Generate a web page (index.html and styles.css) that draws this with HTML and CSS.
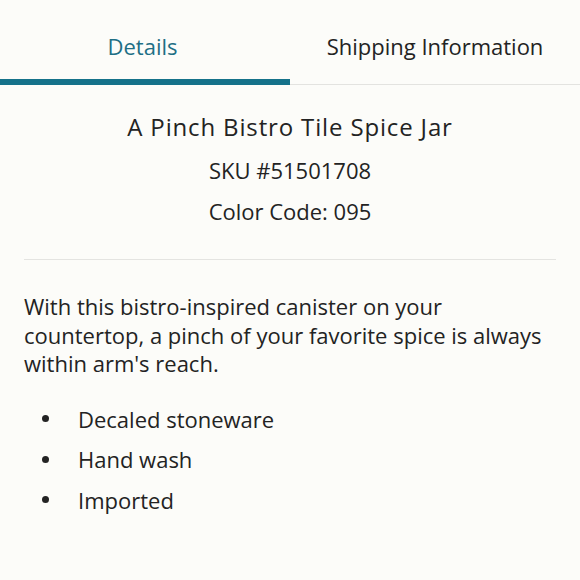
FILE: index.html
```html
<!DOCTYPE html>
<html>
<head>
<meta charset="utf-8">
<link rel="stylesheet" href="styles.css">
</head>
<body>
<div class="tabs">
  <div class="tab active">Details</div>
  <div class="tab">Shipping Information</div>
</div>
<div class="content">
  <div class="head">
    <h1 class="title">A Pinch Bistro Tile Spice Jar</h1>
    <div class="meta">SKU #51501708</div>
    <div class="meta">Color Code: 095</div>
  </div>
  <p class="desc">With this bistro-inspired canister on your countertop, a pinch of your favorite spice is always within arm's reach.</p>
  <ul class="list">
    <li>Decaled stoneware</li>
    <li>Hand wash</li>
    <li>Imported</li>
  </ul>
</div>
</body>
</html>
```
FILE: styles.css
```css
html, body {
  margin: 0;
  padding: 0;
  background: #fcfcf9;
}
body {
  font-family: "Open Sans", "Noto Sans", sans-serif;
  color: #232323;
  width: 580px;
}
.tabs {
  display: flex;
  border-bottom: 1px solid #e3e3e0;
}
.tab {
  flex: 1;
  text-align: center;
  padding-top: 30px;
  padding-bottom: 17px;
  line-height: 32px;
  font-size: 22px;
  color: #232323;
  margin-bottom: -1px;
  border-bottom: 6px solid transparent;
}
.tab.active {
  color: #1e6f85;
  border-bottom-color: #15728a;
  text-indent: -5px;
}
.content {
  padding: 0 24px;
}
.head {
  text-align: center;
  border-bottom: 1px solid #e4e4e1;
  padding-top: 25px;
  padding-bottom: 27px;
}
.title {
  margin: 0 0 6px;
  font-size: 24px;
  font-weight: normal;
  letter-spacing: 0.85px;
  line-height: 34px;
}
.meta {
  font-size: 22px;
  line-height: 41px;
}
.desc {
  margin: 32px 0 0;
  font-size: 22px;
  line-height: 28.5px;
}
.list {
  list-style: none;
  margin: 21px 0 0;
  padding: 0;
  font-size: 22px;
  line-height: 40.5px;
}
.list li {
  display: flex;
  align-items: center;
}
.list li::before {
  content: "";
  width: 7px;
  height: 7px;
  border-radius: 50%;
  background: #232323;
  margin-left: 18px;
  margin-right: 29px;
  flex: none;
}
```
